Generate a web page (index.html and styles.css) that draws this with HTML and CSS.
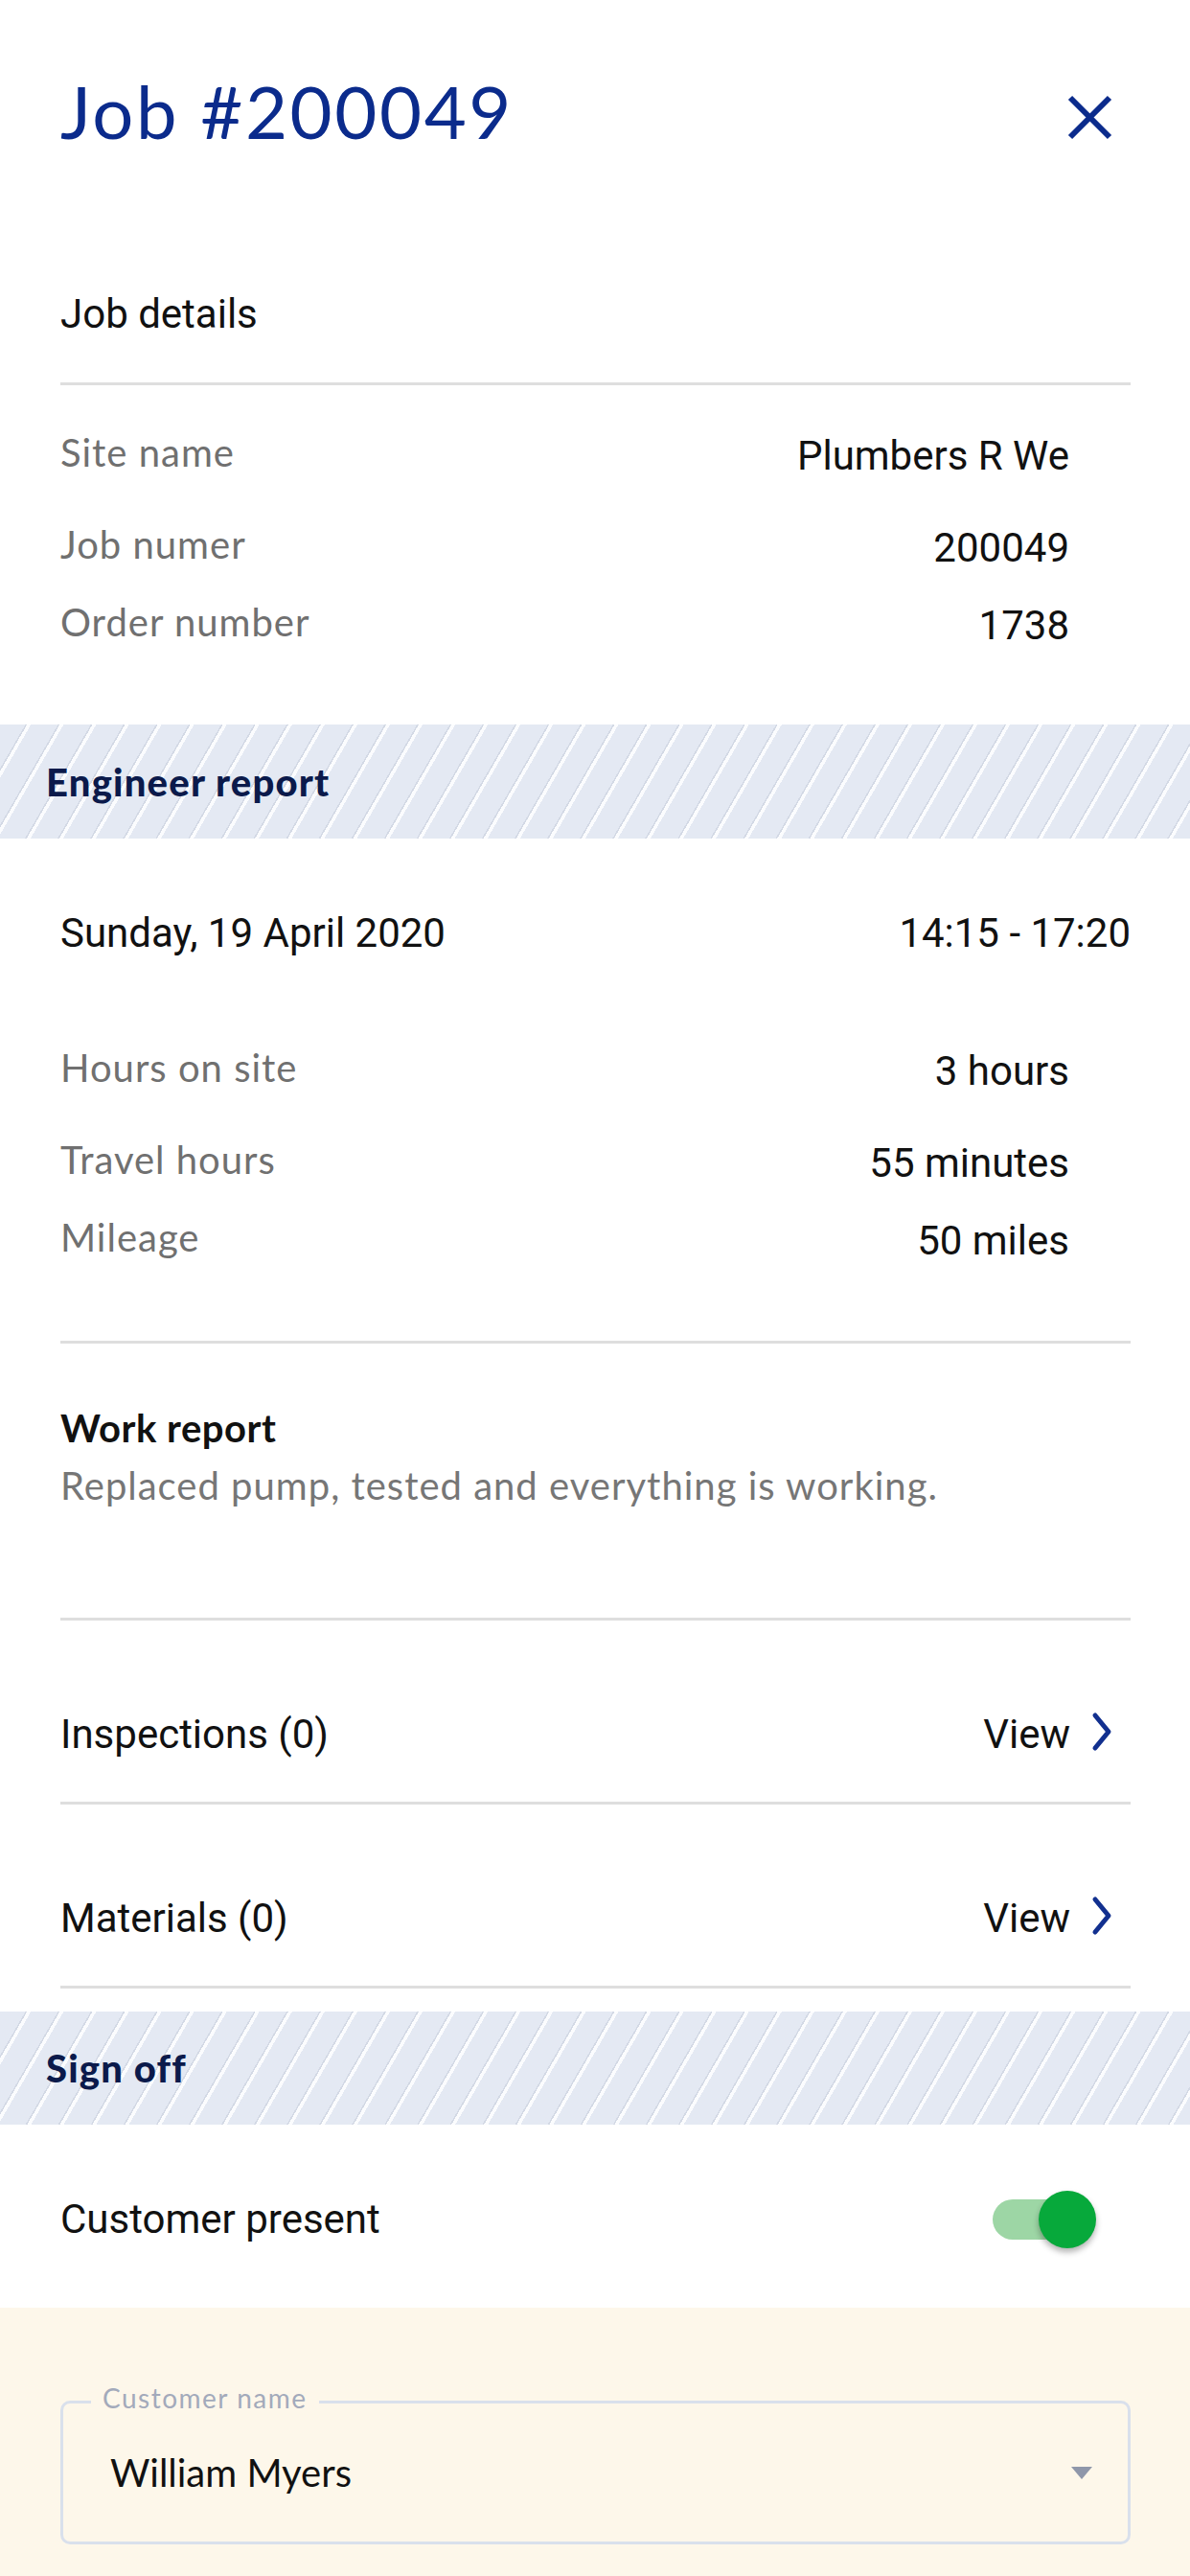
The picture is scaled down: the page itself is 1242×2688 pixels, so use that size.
FILE: index.html
```html
<!DOCTYPE html>
<html lang="en">
<head>
    <meta charset="UTF-8">
    <meta name="viewport" content="width=device-width, initial-scale=1.0">
    <title>Job #200049</title>
    <link rel="stylesheet" href="styles.css">
</head>
<body>
    <div class="header">
        <h1 class="title">Job #200049</h1>
        <svg class="close" viewBox="0 0 49 49" aria-label="Close">
            <path d="M4 4 L45 45 M45 4 L4 45" stroke="#0b2b8c" stroke-width="6" fill="none"/>
        </svg>
    </div>

    <!-- Job details -->
    <div class="section">
        <h2 class="section-title">Job details</h2>
        <div class="divider"></div>
        <div class="kv-list">
            <div class="kv"><span class="kv-label">Site name</span><span class="kv-value">Plumbers R We</span></div>
            <div class="kv"><span class="kv-label">Job numer</span><span class="kv-value">200049</span></div>
            <div class="kv"><span class="kv-label">Order number</span><span class="kv-value">1738</span></div>
        </div>
    </div>

    <div class="banner banner-first"><span class="banner-title">Engineer report</span></div>

    <!-- Engineer report -->
    <div class="section">
        <div class="date-row">
            <span>Sunday, 19 April 2020</span>
            <span>14:15 - 17:20</span>
        </div>
        <div class="kv-list kv-hours">
            <div class="kv"><span class="kv-label">Hours on site</span><span class="kv-value">3 hours</span></div>
            <div class="kv"><span class="kv-label">Travel hours</span><span class="kv-value">55 minutes</span></div>
            <div class="kv"><span class="kv-label">Mileage</span><span class="kv-value">50 miles</span></div>
        </div>
        <div class="divider divider-report"></div>
        <div class="work-title">Work report</div>
        <div class="work-text">Replaced pump, tested and everything is working.</div>
        <div class="divider divider-work"></div>

        <div class="link-row">
            <span>Inspections (0)</span>
            <span class="view">View
                <svg class="chevron" viewBox="0 0 24 42"><polyline points="5,4 19,21 5,38" stroke="#12308f" stroke-width="5" fill="none" stroke-linecap="round" stroke-linejoin="round"/></svg>
            </span>
        </div>
        <div class="link-row">
            <span>Materials (0)</span>
            <span class="view">View
                <svg class="chevron" viewBox="0 0 24 42"><polyline points="5,4 19,21 5,38" stroke="#12308f" stroke-width="5" fill="none" stroke-linecap="round" stroke-linejoin="round"/></svg>
            </span>
        </div>
    </div>

    <div class="banner banner-sign"><span class="banner-title">Sign off</span></div>

    <!-- Sign off -->
    <div class="section">
        <div class="present-row">
            <span>Customer present</span>
            <div class="switch"></div>
        </div>
    </div>

    <div class="signoff-form">
        <div class="field">
            <span class="field-label">Customer name</span>
            <span class="field-value">William Myers</span>
            <svg class="caret" viewBox="0 0 22 13"><polygon points="0,0 22,0 11,13" fill="#8f97aa"/></svg>
        </div>
    </div>
</body>
</html>
```

FILE: styles.css
```css
body {
    margin: 0;
    width: 1242px;
    font-family: Roboto, "Liberation Sans", sans-serif;
    color: #111;
    background: #fff;
}

/* Header */
.header {
    display: flex;
    justify-content: space-between;
    align-items: flex-start;
    padding: 80px 62px 0 63px;
}

.title {
    margin: 0;
    font-family: Lato, "Open Sans", sans-serif;
    font-weight: 400;
    font-size: 76px;
    line-height: 72px;
    letter-spacing: 2.6px;
    color: #0b2b8c;
}

.close {
    width: 49px;
    height: 49px;
    margin-top: 18px;
    margin-right: 18px;
}

.section {
    padding: 0 62px 0 63px;
}

.section-title {
    margin: 146px 0 41px;
    font-size: 42px;
    font-weight: 400;
    line-height: 60px;
}

.divider {
    height: 3px;
    background: #dedede;
}

/* Label / value rows */
.kv-list {
    display: flex;
    flex-direction: column;
    gap: 21px;
    margin-top: 40px;
    padding-right: 64px;
}

.kv {
    display: flex;
    justify-content: space-between;
    height: 60px;
    line-height: 60px;
}

.kv:first-child {
    margin-bottom: 15px;
}

.kv-label {
    font-family: Lato, "Open Sans", sans-serif;
    font-size: 40px;
    letter-spacing: 1px;
    color: #707070;
}

.kv-value {
    font-size: 42px;
    padding-top: 4px;
}

/* Striped section banners */
.banner {
    display: flex;
    align-items: center;
    height: 119px;
    padding-left: 48px;
    background: repeating-linear-gradient(120deg, #e4e9f3 0 23px, #d3d9e5 23px 24.5px, #fbfcfe 24.5px 28px, #e4e9f3 28px 29.5px);
}

.banner-first {
    margin-top: 77px;
}

.banner-sign {
    height: 118px;
    margin-top: 24px;
}

.banner-title {
    font-family: Lato, "Open Sans", sans-serif;
    font-weight: 900;
    font-size: 40px;
    letter-spacing: 1.2px;
    color: #0b1a4b;
}

/* Engineer report */
.date-row {
    display: flex;
    justify-content: space-between;
    margin-top: 69px;
    font-size: 42px;
    line-height: 60px;
}

.kv-hours {
    margin-top: 80px;
}

.divider-report {
    margin-top: 78px;
}

.work-title {
    margin-top: 63px;
    font-family: Lato, "Open Sans", sans-serif;
    font-weight: 700;
    font-size: 40px;
    line-height: 50px;
    letter-spacing: 0.5px;
}

.work-text {
    margin-top: 10px;
    font-family: Lato, "Open Sans", sans-serif;
    font-size: 40px;
    line-height: 50px;
    letter-spacing: 1px;
    color: #767676;
}

.divider-work {
    margin-top: 113px;
}

.link-row {
    display: flex;
    justify-content: space-between;
    align-items: center;
    padding: 89px 18px 40px 0;
    font-size: 42px;
    line-height: 60px;
    border-bottom: 3px solid #dedede;
}

.view {
    display: flex;
    align-items: center;
    gap: 21px;
}

.chevron {
    width: 24px;
    height: 42px;
    margin-top: -6px;
}

/* Sign off */
.present-row {
    display: flex;
    justify-content: space-between;
    align-items: center;
    padding: 69px 42px 62px 0;
    font-size: 42px;
    line-height: 60px;
}

.switch {
    position: relative;
    width: 102px;
    height: 42px;
    border-radius: 21px;
    background: #9dd6a5;
}

.switch::after {
    content: '';
    position: absolute;
    right: -6px;
    top: -9px;
    width: 60px;
    height: 60px;
    border-radius: 50%;
    background: #07a93b;
    box-shadow: 0 4px 6px rgba(0, 0, 0, 0.3);
}

.signoff-form {
    background: #fdf7ea;
    padding: 97px 62px 40px 63px;
}

.field {
    position: relative;
    box-sizing: border-box;
    height: 150px;
    display: flex;
    justify-content: space-between;
    align-items: center;
    padding: 0 37px 0 49px;
    border: 3px solid #d9e0ec;
    border-radius: 10px;
}

.field-label {
    position: absolute;
    top: -23px;
    left: 29px;
    padding: 0 12px;
    background: #fdf7ea;
    font-family: Lato, "Open Sans", sans-serif;
    font-size: 28px;
    line-height: 34px;
    letter-spacing: 1.5px;
    color: #a3aabb;
}

.field-value {
    font-family: Lato, "Open Sans", sans-serif;
    font-size: 40px;
}

.caret {
    width: 22px;
    height: 13px;
}
```
